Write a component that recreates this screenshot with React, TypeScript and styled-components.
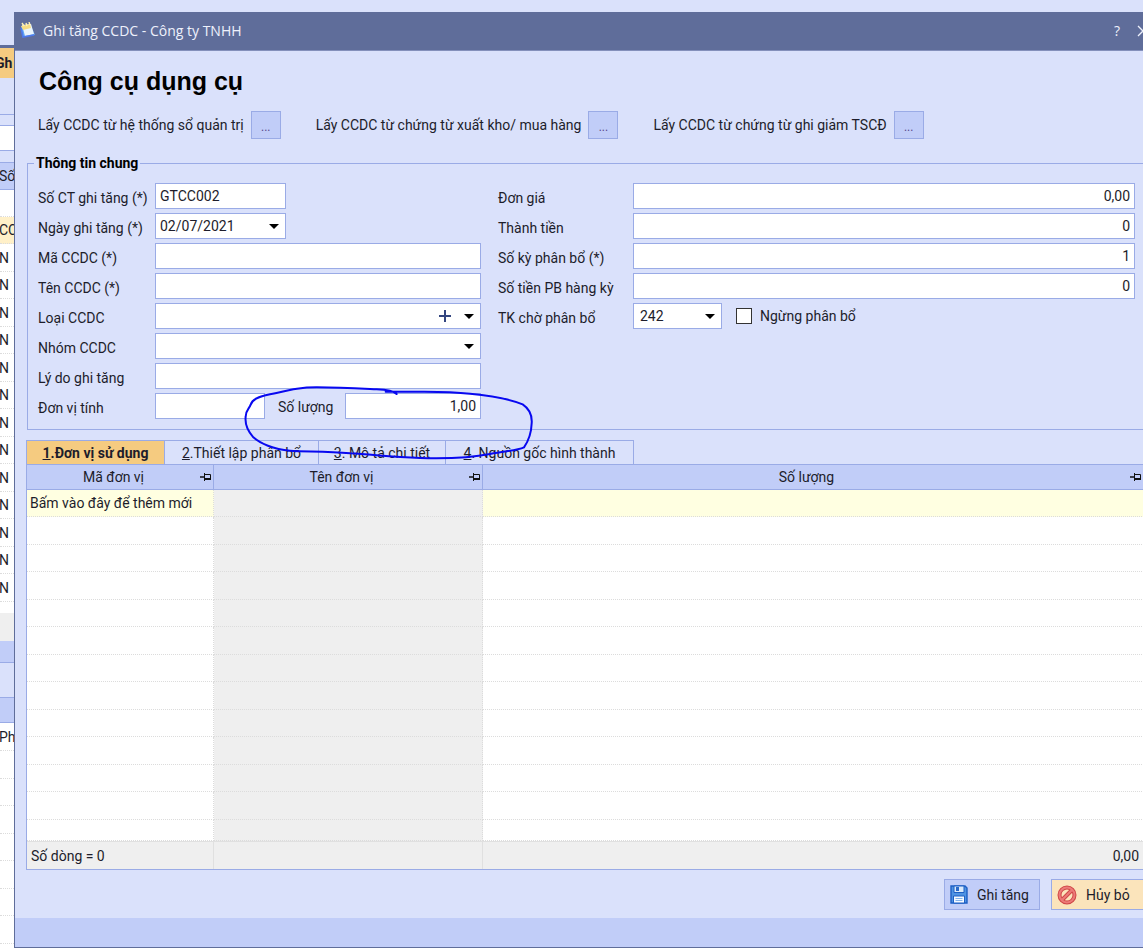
import React from 'react';
import styled, { createGlobalStyle, css } from 'styled-components';

const line = '#9aabe6';
const soft = '#dae1fb';
const band = '#c1cdf8';

const Global = createGlobalStyle`
  * { box-sizing: border-box; }
  body { margin: 0; background: ${soft}; color: #1d1d2b; font: 14px/16px Roboto, "Liberation Sans", sans-serif; }
  button, input, select { font: inherit; color: inherit; }
`;

const Page = styled.div`
  display: flex;
  min-height: 100vh;
  overflow: hidden;
  position: relative;
`;

/* Window that stays visible behind the dialog */
const Behind = styled.div`
  width: 14px;
  flex: none;
  overflow: hidden;
  white-space: nowrap;
  background: #fff;
`;

const Strip = styled.div<{ $h: number; $bg?: string; $bold?: boolean; $line?: boolean; $dots?: boolean }>`
  height: ${p => p.$h}px;
  line-height: ${p => p.$h}px;
  background: ${p => p.$bg ?? soft};
  font-weight: ${p => (p.$bold ? 700 : 400)};
  text-indent: ${p => (p.$bold ? -5 : -1)}px;
  ${p => p.$line && css`border-bottom: 1px solid ${line};`}
  ${p => p.$dots && css`border-bottom: 1px dotted #dcdcdc;`}
  overflow: hidden;
`;

const Dialog = styled.main`
  position: relative;
  flex: 1;
  min-width: 0;
  margin: 12px -14px 0 0;
  border: 1px solid #5f6d9a;
  border-top: 0;
  background: ${soft};
  display: flex;
  flex-direction: column;
`;

const TitleBar = styled.header`
  display: flex;
  align-items: center;
  height: 39px;
  padding: 0 0 0 5px;
  background: #5f6d9a;
  border-bottom: 1px solid #8490bb;
  color: #eef1fc;
  font: 14px/20px "Open Sans", "Noto Sans", sans-serif;
`;

const TitleText = styled.span`
  flex: 1;
  margin-left: 7px;
`;

const WindowButton = styled.button`
  width: 26px;
  height: 28px;
  padding: 0;
  border: 0;
  background: none;
  display: grid;
  place-items: center;
`;

const Content = styled.div`
  flex: 1;
  padding: 0 11px;
  display: flex;
  flex-direction: column;
`;

const Heading = styled.h1`
  margin: 14px 0 0 13px;
  font: 700 25px/32px "Liberation Sans", sans-serif;
  color: #000;
`;

const Sources = styled.div`
  display: flex;
  margin: 14px 0 0 12px;
  gap: 35px;
`;

const Source = styled.label`
  display: flex;
  align-items: center;
  gap: 7px;
  white-space: nowrap;
`;

const MoreButton = styled.button`
  width: 30px;
  height: 28px;
  padding: 4px 0 0;
  border: 1px solid ${line};
  background: ${band};
  color: #5a4a8c;
  font-size: 12px;
`;

const Group = styled.fieldset`
  margin: 16px 0 0 1px;
  padding: 12px 9px 10px 10px;
  border: 1px solid ${line};
  display: grid;
  grid-template-columns: 443px 1fr;
  column-gap: 17px;
  min-width: 0;
`;

const Legend = styled.legend`
  margin-left: -4px;
  padding: 0 2px;
  font-weight: 700;
  color: #000;
`;

const Fields = styled.div<{ $label: number }>`
  display: grid;
  grid-template-columns: ${p => p.$label}px 1fr;
  grid-auto-rows: 26px;
  row-gap: 4px;
  align-content: start;
`;

const Label = styled.label`
  line-height: 20px;
  padding-top: 5px;
  white-space: nowrap;
`;

const Row = styled.div`
  display: flex;
  align-items: center;
`;

const TextBox = styled.input<{ $w?: number; $right?: boolean }>`
  width: ${p => (p.$w ? `${p.$w}px` : '100%')};
  height: 26px;
  padding: 0 4px;
  border: 1px solid ${line};
  border-radius: 0;
  background: #fff;
  outline: 0;
  text-align: ${p => (p.$right ? 'right' : 'left')};
`;

const Combo = styled.div<{ $w?: number }>`
  position: relative;
  width: ${p => (p.$w ? `${p.$w}px` : '100%')};
  height: 26px;
`;

const Select = styled.select`
  appearance: none;
  width: 100%;
  height: 26px;
  padding: 0 6px;
  border: 1px solid ${line};
  border-radius: 0;
  background: #fff;
`;

const Arrow = styled.span`
  position: absolute;
  right: 7px;
  top: 11px;
  border: 5px solid transparent;
  border-top-color: #000;
  border-bottom: 0;
  pointer-events: none;
`;

const AddButton = styled.button`
  position: absolute;
  right: 28px;
  top: 5px;
  width: 16px;
  height: 16px;
  padding: 0;
  border: 0;
  background: none;
  display: grid;
  place-items: center;
`;

const InnerLabel = styled.label`
  width: 80px;
  padding: 2px 0 0 13px;
`;

const Check = styled.label`
  display: flex;
  align-items: center;
  gap: 8px;
  margin-left: 14px;
`;

const Box = styled.input`
  appearance: none;
  width: 16px;
  height: 16px;
  margin: 0;
  border: 1px solid #333;
  background: #fff;
`;

const Tabs = styled.div`
  display: flex;
  margin-top: 10px;
`;

const Tab = styled.button<{ $w: number; $active?: boolean }>`
  width: ${p => p.$w}px;
  height: 24px;
  padding: 1px 0 0;
  border: 1px solid ${line};
  border-width: 1px 1px 0 0;
  background: ${p => (p.$active ? '#f5cb80' : soft)};
  font-weight: ${p => (p.$active ? 700 : 400)};
  &:first-child { border-left-width: 1px; }
`;

const Table = styled.table`
  width: 100%;
  table-layout: fixed;
  border-collapse: separate;
  border-spacing: 0;
  border: 1px solid ${line};
  background: #fff;
`;

const Head = styled.th`
  height: 25px;
  padding: 0 6px 0 0;
  background: ${band};
  border: 1px solid ${line};
  border-width: 0 1px 1px 0;
  font-weight: 400;
`;

const HeadInner = styled.div`
  display: flex;
  align-items: center;
  span { flex: 1; }
  svg { flex: none; margin-right: -5px; }
`;

const Cell = styled.td<{ $shade?: boolean }>`
  padding: 0 3px;
  border: 1px dotted #dcdcdc;
  border-width: 0 1px 1px 0;
  background: ${p => (p.$shade ? '#efefef' : 'transparent')};
  white-space: nowrap;
`;

const BodyRow = styled.tr<{ $h: number; $new?: boolean }>`
  height: ${p => p.$h}px;
  background: ${p => (p.$new ? '#ffffe1' : '#fff')};
`;

const Foot = styled.td`
  height: 28px;
  padding: 0 4px;
  background: #efefef;
  border: 1px solid #e0e0e0;
  border-width: 1px 1px 0 0;
  &:last-child { text-align: right; }
`;

const Actions = styled.div`
  display: flex;
  justify-content: flex-end;
  gap: 11px;
  margin-right: -2px;
  padding: 9px 0 8px;
`;

const Action = styled.button<{ $warm?: boolean }>`
  display: flex;
  align-items: center;
  gap: 9px;
  width: 96px;
  height: 31px;
  padding: 0 5px;
  border: 1px solid ${line};
  background: ${p => (p.$warm ? '#fbe4bb' : band)};
  white-space: nowrap;
`;

const StatusBar = styled.footer`
  height: 29px;
  background: ${band};
`;

const Ink = styled.svg`
  position: absolute;
  left: 225px;
  top: 358px;
  pointer-events: none;
`;

const Pin = () => (
  <svg width="12" height="10" viewBox="0 0 12 10" fill="none" stroke="#111">
    <path d="M0 5H4M4.5 1V9M5 2.5H10.5V7.5" />
    <path d="M5 7H11" strokeWidth="2" />
    <path d="M0 5H4" />
  </svg>
);

const AppIcon = () => (
  <svg width="16" height="18" viewBox="0 0 16 18">
    <path d="M1 4 3 15 15 13 11 4Z" fill="#5fa8f4" />
    <path d="M2 3 11 2 14 12 5 14Z" fill="#e9f4fb" />
    <path d="M1 4 10 2 11 6 3 8Z" fill="#f6dc83" />
    <path d="M2 1 4 4M6 1 7 4M9 0 10 3" stroke="#fff2b5" strokeWidth="1.4" />
    <path d="M1 6 3 15 14 13" fill="none" stroke="#4d79ed" strokeWidth="1.6" />
  </svg>
);

const SaveIcon = () => (
  <svg width="18" height="19" viewBox="0 0 18 19">
    <path d="M1 1H15L17 3V18H1Z" fill="#4f93e2" stroke="#1d5fc4" strokeWidth="1.4" />
    <path d="M4 1H14V7.5H4Z" fill="#d9eafb" stroke="#1d5fc4" />
    <path d="M6 2H9V6H6Z" fill="#2868ca" />
    <path d="M3.5 11H14.5V18H3.5Z" fill="#f5faff" stroke="#1d5fc4" />
    <path d="M5.5 13.5H12.5M5.5 15.5H12.5" stroke="#83b2ea" />
  </svg>
);

const CancelIcon = () => (
  <svg width="20" height="20" viewBox="0 0 20 20" fill="none">
    <circle cx="10" cy="10" r="7.5" stroke="#cf4747" strokeWidth="4" />
    <path d="M5 15 15 5" stroke="#cf4747" strokeWidth="4" />
    <circle cx="10" cy="10" r="7.5" stroke="#ec7b78" strokeWidth="2" />
    <path d="M5 15 15 5" stroke="#ec7b78" strokeWidth="2" />
  </svg>
);

const sources = [
  'Lấy CCDC từ hệ thống sổ quản trị',
  'Lấy CCDC từ chứng từ xuất kho/ mua hàng',
  'Lấy CCDC từ chứng từ ghi giảm TSCĐ',
];

const tabs = [
  { n: '1', text: '.Đơn vị sử dụng', w: 139 },
  { n: '2', text: '.Thiết lập phân bổ', w: 154 },
  { n: '3', text: '. Mô tả chi tiết', w: 127 },
  { n: '4', text: '. Nguồn gốc hình thành', w: 188 },
];

const amounts = [
  ['price', 'Đơn giá', '0,00'],
  ['total', 'Thành tiền', '0'],
  ['periods', 'Số kỳ phân bổ (*)', '1'],
  ['perPeriod', 'Số tiền PB hàng kỳ', '0'],
];

const rowHeights = [28, 27, 28, 27, 28, 27, 28, 27, 28, 27, 28, 21];
const behindRows = [28, 27, 28, 27, 28, 27, 28, 27, 28, 27, 28, 27, 28];

export default function App() {
  return (
    <Page>
      <Global />
      <Behind aria-hidden="true">
        <Strip $h={45} />
        <Strip $h={3} $bg="#5f6d9a" />
        <Strip $h={30} $bg="#f5cb80" $bold>Gh</Strip>
        <Strip $h={37} $line />
        <Strip $h={11} $line />
        <Strip $h={25} $bg="#fff" $line />
        <Strip $h={12} $line />
        <Strip $h={27} $bg={band} $line>Số</Strip>
        <Strip $h={27} $bg="#fff" $dots />
        <Strip $h={27} $bg="#fff0c8" $dots>CC</Strip>
        {behindRows.map((h, i) => <Strip key={i} $h={h} $bg="#fff" $dots>N</Strip>)}
        <Strip $h={11} $bg="#fff" />
        <Strip $h={28} $bg="#efefef" />
        <Strip $h={22} $bg={band} $line />
        <Strip $h={35} $line />
        <Strip $h={25} $bg={band} $line />
        <Strip $h={28} $bg="#fff" $dots>Ph</Strip>
        {behindRows.slice(0, 7).map((h, i) => <Strip key={i} $h={h} $bg="#fff" $dots />)}
      </Behind>

      <Dialog>
        <TitleBar>
          <AppIcon />
          <TitleText>Ghi tăng CCDC - Công ty TNHH</TitleText>
          <WindowButton aria-label="Trợ giúp">?</WindowButton>
          <WindowButton aria-label="Đóng">
            <svg width="12" height="12" viewBox="0 0 12 12" stroke="#eef1fc" strokeWidth="1.3"><path d="M1 1 11 11M11 1 1 11" /></svg>
          </WindowButton>
        </TitleBar>

        <Content>
          <Heading>Công cụ dụng cụ</Heading>
          <Sources>
            {sources.map(s => <Source key={s}>{s}<MoreButton>...</MoreButton></Source>)}
          </Sources>

          <Group>
            <Legend>Thông tin chung</Legend>
            <Fields $label={117}>
              <Label htmlFor="no">Số CT ghi tăng (*)</Label>
              <TextBox id="no" $w={131} defaultValue="GTCC002" />
              <Label htmlFor="date">Ngày ghi tăng (*)</Label>
              <Combo $w={131}><TextBox id="date" defaultValue="02/07/2021" /><Arrow /></Combo>
              <Label htmlFor="code">Mã CCDC (*)</Label>
              <TextBox id="code" />
              <Label htmlFor="name">Tên CCDC (*)</Label>
              <TextBox id="name" />
              <Label htmlFor="kind">Loại CCDC</Label>
              <Combo>
                <Select id="kind" />
                <AddButton aria-label="Thêm">
                  <svg width="12" height="12" viewBox="0 0 12 12" stroke="#33457f" strokeWidth="2"><path d="M6 0V12M0 6H12" /></svg>
                </AddButton>
                <Arrow />
              </Combo>
              <Label htmlFor="group">Nhóm CCDC</Label>
              <Combo><Select id="group" /><Arrow /></Combo>
              <Label htmlFor="reason">Lý do ghi tăng</Label>
              <TextBox id="reason" />
              <Label htmlFor="unit">Đơn vị tính</Label>
              <Row>
                <TextBox id="unit" $w={110} />
                <InnerLabel htmlFor="qty">Số lượng</InnerLabel>
                <TextBox id="qty" $w={136} $right defaultValue="1,00" />
              </Row>
            </Fields>
            <Fields $label={135}>
              {amounts.map(([id, text, value]) => (
                <React.Fragment key={id}>
                  <Label htmlFor={id}>{text}</Label>
                  <TextBox id={id} $right defaultValue={value} />
                </React.Fragment>
              ))}
              <Label htmlFor="account">TK chờ phân bổ</Label>
              <Row>
                <Combo $w={89}><Select id="account"><option>242</option></Select><Arrow /></Combo>
                <Check><Box type="checkbox" />Ngừng phân bổ</Check>
              </Row>
            </Fields>
          </Group>

          <Tabs role="tablist">
            {tabs.map((t, i) => (
              <Tab key={t.n} role="tab" aria-selected={i === 0} $w={t.w} $active={i === 0}><u>{t.n}</u>{t.text}</Tab>
            ))}
          </Tabs>

          <Table>
            <colgroup><col style={{ width: 187 }} /><col style={{ width: 269 }} /><col /></colgroup>
            <thead>
              <tr>
                {['Mã đơn vị', 'Tên đơn vị', 'Số lượng'].map(h => (
                  <Head key={h}><HeadInner><span>{h}</span><Pin /></HeadInner></Head>
                ))}
              </tr>
            </thead>
            <tbody>
              <BodyRow $h={27} $new><Cell>Bấm vào đây để thêm mới</Cell><Cell $shade /><Cell /></BodyRow>
              {rowHeights.map((h, i) => (
                <BodyRow key={i} $h={h}><Cell /><Cell $shade /><Cell /></BodyRow>
              ))}
            </tbody>
            <tfoot>
              <tr><Foot>Số dòng = 0</Foot><Foot /><Foot>0,00</Foot></tr>
            </tfoot>
          </Table>

          <Actions>
            <Action><SaveIcon />Ghi tăng</Action>
            <Action $warm><CancelIcon />Hủy bỏ</Action>
          </Actions>
        </Content>
        <StatusBar />

        <Ink width="300" height="100" viewBox="0 0 900 300" fill="none" stroke="#0808f0" strokeWidth="6" strokeLinecap="round" strokeLinejoin="round">
          <path d="M470 72C460 62 440 59 410 58C350 55 300 52 230 52C180 52 150 60 90 73C55 80 36 88 32 104C28 116 17 120 17 140C14 165 22 182 40 202C60 220 100 238 150 242C200 245 260 244 330 250C400 254 450 260 540 264C610 266 690 264 750 252C800 242 830 242 852 232C862 218 874 190 875 160C877 135 866 115 848 103C800 83 740 76 690 71C630 64 580 65 530 65H437" />
        </Ink>
      </Dialog>
    </Page>
  );
}
